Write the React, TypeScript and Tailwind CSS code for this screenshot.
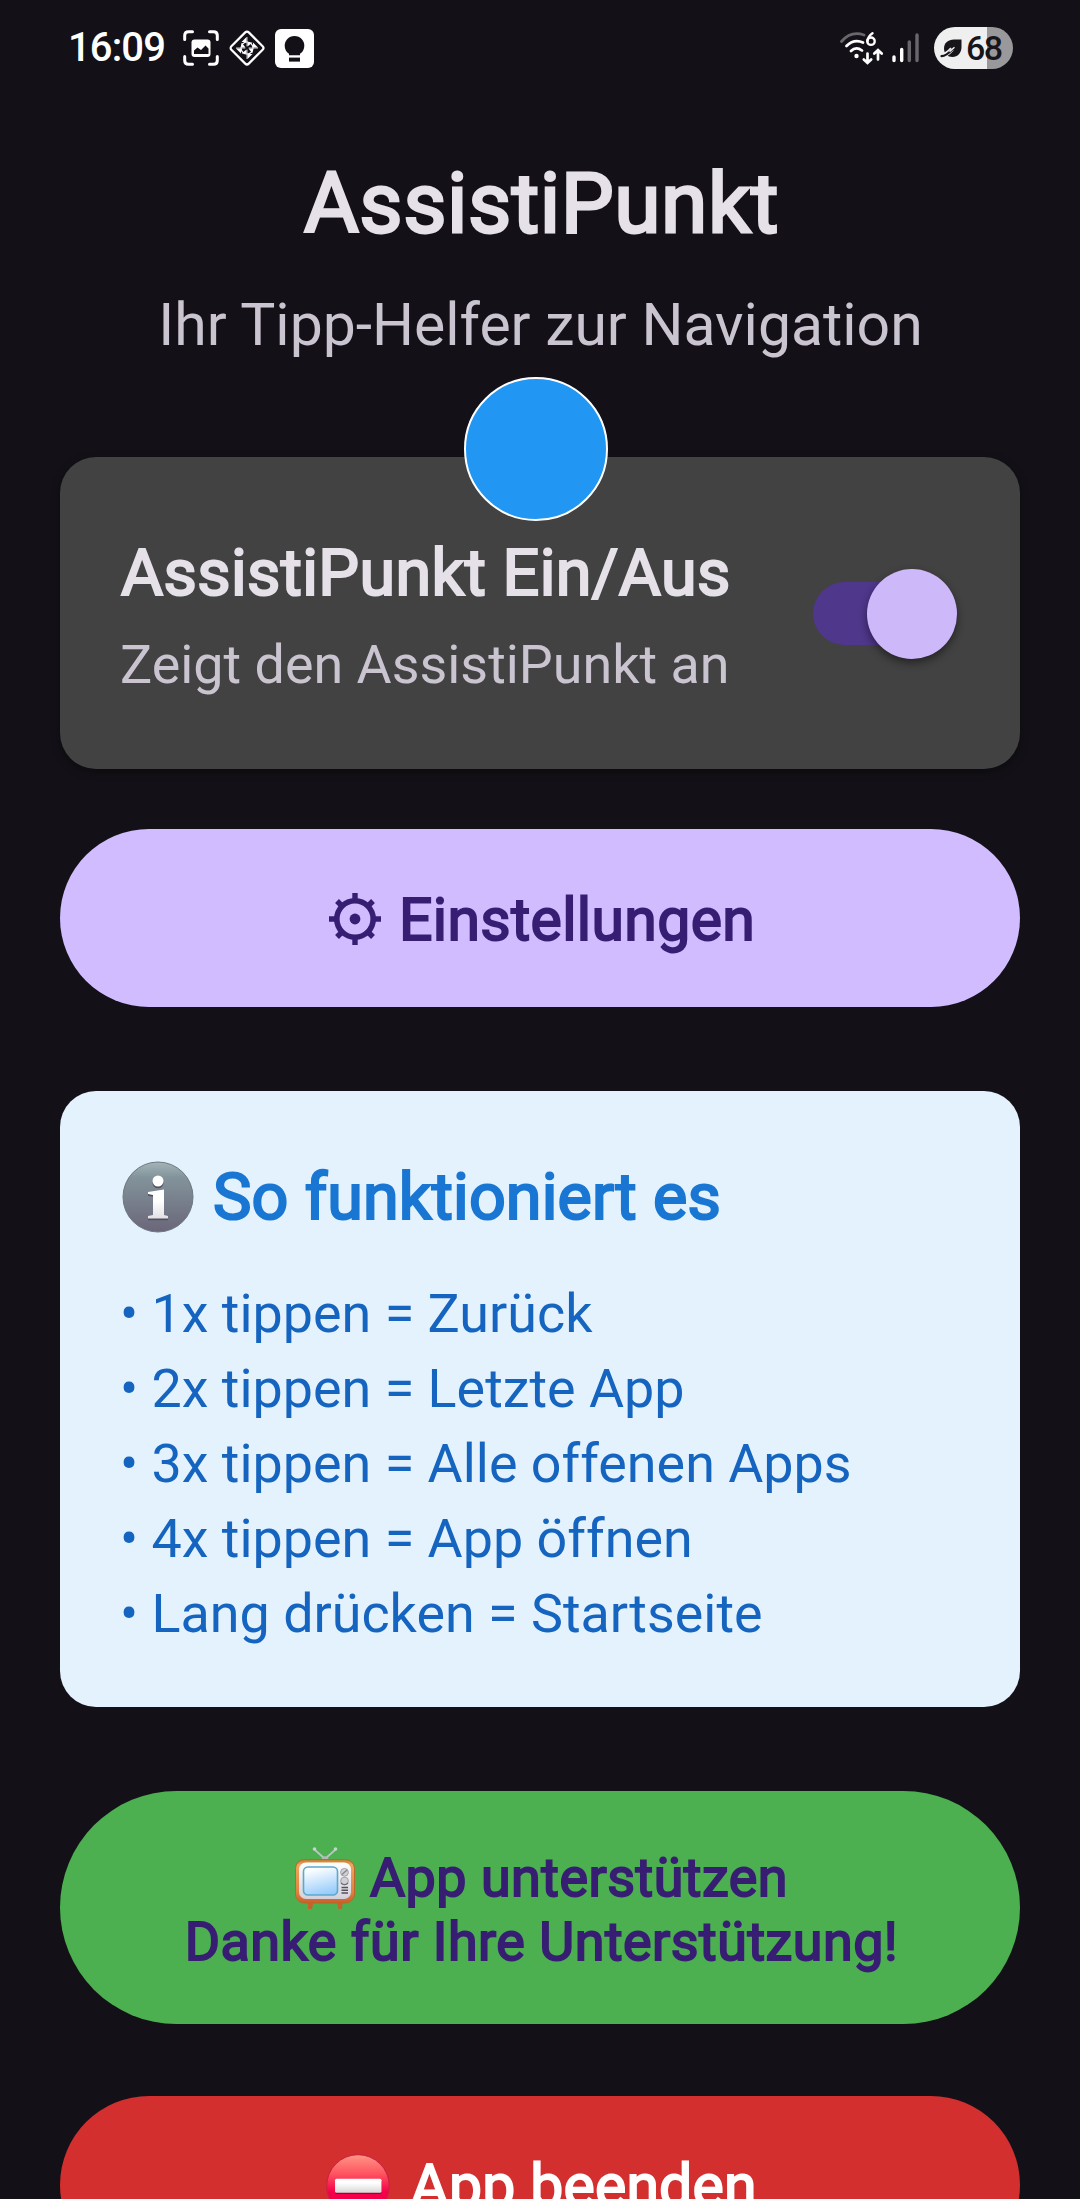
import type { ReactNode } from 'react';

function ScreenshotIcon() {
  return (
    <svg className="h-[36px] w-[36px]" viewBox="0 0 36 36" fill="none">
      <path d="M1.7 9.5V5.5Q1.7 1.7 5.5 1.7H9.5M26.5 1.7H30.5Q34.3 1.7 34.3 5.5V9.5M34.3 26.5V30.5Q34.3 34.3 30.5 34.3H26.5M9.5 34.3H5.5Q1.7 34.3 1.7 30.5V26.5" stroke="#fff" strokeWidth="3" strokeLinecap="round" />
      <rect x="8.5" y="9.5" width="19" height="17.5" rx="3" fill="#fff" />
      <path d="M11 24V20.5L14.5 17.5L18 20L22.5 15.5L25.5 18.5V24Z" fill="#131117" />
    </svg>
  );
}

function DiamondIcon() {
  return (
    <svg className="h-[38px] w-[38px]" viewBox="0 0 38 38" fill="none">
      <rect x="6.7" y="6.7" width="24.6" height="24.6" rx="2.5" transform="rotate(45 19 19)" stroke="#fff" strokeWidth="2.2" />
      <g fill="#fff">
        <path d="M18.5 8V13H13.5ZM19.5 13.5L24.5 13.5L19.5 17.5Z" />
        <path d="M30 18.5H25V13.5ZM24.5 19.5V24.5L20.5 19.5Z" />
        <path d="M19.5 30V25H24.5ZM18.5 24.5H13.5L18.5 20.5Z" />
        <path d="M8 19.5H13V24.5ZM13.5 18.5V13.5L17.5 18.5Z" />
      </g>
      <circle cx="19" cy="19" r="6" stroke="#fff" strokeWidth="1.2" />
      <path d="M8 19H30M19 8V30" stroke="#fff" strokeWidth="0.8" />
      <circle cx="19" cy="19" r="1.8" fill="#131117" />
    </svg>
  );
}

function BulbIcon() {
  return (
    <svg className="h-[39px] w-[39px]" viewBox="0 0 39 39">
      <rect width="39" height="39" rx="6" fill="#fff" />
      <path d="M14 26.3V24.8A9.8 9.8 0 1 1 25 24.8V26.3Z" fill="#131117" />
      <rect x="14" y="28.6" width="11" height="4" fill="#131117" />
    </svg>
  );
}

function WifiIcon() {
  return (
    <svg className="h-[36px] w-[46px]" viewBox="0 0 46 36" fill="none" strokeLinecap="round" strokeWidth="2.8">
      <path d="M2.5 11.5Q12 0.5 25 5" stroke="#69676c" />
      <path d="M7.5 16Q15 8.5 24 12.5M12 21Q17 16 23 20.5" stroke="#fff" />
      <circle cx="17.5" cy="26" r="2.2" fill="#fff" />
      <path d="M33.5 3.2C29.5 6 28.5 8.5 28.5 11.2" stroke="#fff" strokeWidth="2.4" />
      <circle cx="32" cy="11.2" r="3.7" stroke="#fff" strokeWidth="2.4" />
      <path d="M28.5 23.5V32.5M24.8 29.5L28.5 33L32.2 29.5M39 29.5V20.5M35.3 23.5L39 20L42.7 23.5" stroke="#fff" strokeWidth="2.7" />
    </svg>
  );
}

function SignalIcon() {
  return (
    <svg className="h-[30px] w-[28px]" viewBox="0 0 28 30" strokeWidth="3.4" strokeLinecap="round">
      <path d="M2 24V27.5M9.7 16.5V27.5" stroke="#fff" />
      <path d="M17.3 9V27.5M25 2V27.5" stroke="#69676c" />
    </svg>
  );
}

function LeafIcon() {
  return (
    <svg className="h-[21px] w-[23px]" viewBox="0 0 23 21">
      <path d="M21.5 1.5V9C21.5 15 17.5 19 12.5 19C7.5 19 4 15.5 4 10.5C4 5 8 1.5 14 1.5Z" fill="#17151a" />
      <path d="M0 17.5C5 18 9 14.5 12 11" fill="none" stroke="#efeff0" strokeWidth="4.4" />
      <path d="M1.5 18.2C5.5 18 9 15 12.5 11.5" fill="none" stroke="#17151a" strokeWidth="2.2" strokeLinecap="round" />
      <path d="M9.5 13.6L14.5 9.2" stroke="#efeff0" strokeWidth="1.4" />
    </svg>
  );
}

function GearIcon() {
  return (
    <svg className="h-[52px] w-[52px]" viewBox="-26 -26 52 52" fill="none" stroke="#371e73">
      <circle r="18.2" strokeWidth="5.6" />
      <circle r="5.4" fill="#371e73" stroke="none" />
      <path d="M0-20V-26M0 20V26M20 0H26M-20 0H-26M14-14L18-18M-14-14L-18-18M14 14L18 18M-14 14L-18 18" strokeWidth="5.4" />
    </svg>
  );
}

function InfoIcon() {
  return (
    <svg className="h-[72px] w-[72px] shrink-0" viewBox="0 0 72 72">
      <defs>
        <linearGradient id="infoDisc" x1="0" y1="0" x2="0" y2="1">
          <stop offset="0" stopColor="#a3b5b8" />
          <stop offset="0.22" stopColor="#82939b" />
          <stop offset="1" stopColor="#6a6679" />
        </linearGradient>
        <linearGradient id="infoMark" x1="0" y1="0" x2="0" y2="1">
          <stop offset="0.4" stopColor="#fff" />
          <stop offset="1" stopColor="#e2e0e3" />
        </linearGradient>
      </defs>
      <circle cx="36" cy="36" r="35" fill="url(#infoDisc)" stroke="#6d7881" strokeWidth="1" />
      <g transform="translate(0 1.8)" fill="#4f5060">
        <circle cx="36" cy="20" r="5.5" />
        <path d="M26 31L42 28.5V54L46 55V57.5H26V55L31 54V34L26 33Z" />
      </g>
      <circle cx="36" cy="20" r="5.5" fill="#fff" />
      <path d="M26 31L42 28.5V54L46 55V57.5H26V55L31 54V34L26 33Z" fill="url(#infoMark)" />
    </svg>
  );
}

function TvIcon() {
  return (
    <svg className="h-[64px] w-[60px] shrink-0" viewBox="0 0 60 64">
      <defs>
        <linearGradient id="tvWood" x1="0" y1="0" x2="0" y2="1">
          <stop offset="0" stopColor="#c07a2c" />
          <stop offset="0.12" stopColor="#eda75f" />
          <stop offset="0.75" stopColor="#e0823f" />
          <stop offset="1" stopColor="#c9602a" />
        </linearGradient>
        <linearGradient id="tvPanel" x1="0" y1="0" x2="0" y2="1">
          <stop offset="0" stopColor="#fff" />
          <stop offset="1" stopColor="#d3d0da" />
        </linearGradient>
        <linearGradient id="tvScreen" x1="0.3" y1="0" x2="0.6" y2="1">
          <stop offset="0.05" stopColor="#fff" />
          <stop offset="1" stopColor="#95cbfb" />
        </linearGradient>
      </defs>
      <path d="M19.5 2.5L30 12L40.5 2.5" fill="none" stroke="#b9c6c0" strokeWidth="1.8" />
      <circle cx="19.5" cy="2" r="1.8" fill="#c9d3ce" />
      <circle cx="40.5" cy="2" r="1.8" fill="#c9d3ce" />
      <path d="M26 12.5Q30 5.5 34 12.5Z" fill="#b2b9b7" />
      <path d="M13 55H18.5L17 62H13ZM42 55H47.5L47 62H43.5Z" fill="#c5632a" />
      <rect x="0.5" y="12.5" width="59" height="43.5" rx="9" fill="url(#tvWood)" stroke="#b8682b" />
      <rect x="4" y="15.5" width="52" height="36.5" rx="7" fill="url(#tvPanel)" />
      <rect x="8.5" y="20" width="34" height="28" rx="4.5" fill="url(#tvScreen)" stroke="#5ba9cb" strokeWidth="1.6" />
      <circle cx="49.5" cy="25.3" r="3.9" fill="#d0d0d5" stroke="#96959c" strokeWidth="0.8" />
      <path d="M47 27.5L52 23" stroke="#8a888f" strokeWidth="1.4" />
      <circle cx="49.5" cy="34" r="3.9" fill="#d0d0d5" stroke="#96959c" strokeWidth="0.8" />
      <path d="M46 36C48 38 51 38 53 36" fill="none" stroke="#716f76" strokeWidth="1.4" />
      <path d="M46.5 40.5H53M46.5 43.3H53M46.5 46.1H53" stroke="#55525c" strokeWidth="1.5" />
    </svg>
  );
}

function NoEntryIcon() {
  return (
    <svg className="h-[64px] w-[64px] shrink-0" viewBox="0 0 64 64">
      <defs>
        <linearGradient id="stopDisc" x1="0" y1="0" x2="0" y2="1">
          <stop offset="0" stopColor="#ff9787" />
          <stop offset="0.3" stopColor="#ff5561" />
          <stop offset="0.6" stopColor="#f40048" />
        </linearGradient>
        <linearGradient id="stopBar" x1="0" y1="0" x2="0" y2="1">
          <stop offset="0.3" stopColor="#fff" />
          <stop offset="1" stopColor="#d9d7d9" />
        </linearGradient>
      </defs>
      <circle cx="32" cy="32" r="31.3" fill="url(#stopDisc)" stroke="#c91f43" />
      <rect x="9" y="26.5" width="46.5" height="13.5" rx="1.5" fill="#a80036" />
      <rect x="9" y="24.7" width="46.5" height="14" rx="1.5" fill="url(#stopBar)" />
    </svg>
  );
}

function StatusBar() {
  return (
    <header className="flex h-[96px] items-center justify-between pr-[67px] pl-[68px] text-white">
      <div className="flex items-center">
        <span className="w-[115px] text-[40px] leading-[96px] font-medium tracking-[-0.9px]">16:09</span>
        <ScreenshotIcon />
        <span className="ml-[9px] flex"><DiamondIcon /></span>
        <span className="ml-[9px] flex"><BulbIcon /></span>
      </div>
      <div className="flex items-center">
        <WifiIcon />
        <span className="ml-[7px] flex"><SignalIcon /></span>
        <div className="ml-[14px] flex h-[42px] w-[79px] items-center rounded-full bg-[linear-gradient(to_right,#efeff0_53px,#99989a_53px)] pl-[6px] text-[#17151a]">
          <LeafIcon />
          <span className="ml-[3px] text-[34px] leading-[42px] font-medium tracking-[-1.6px]">68</span>
        </div>
      </div>
    </header>
  );
}

function ButtonLabel({ className, children }: { className: string; children: ReactNode }) {
  return <span className={`text-[58.9px] leading-[70px] whitespace-nowrap ${className}`}>{children}</span>;
}

const steps = [
  '1x tippen = Zurück',
  '2x tippen = Letzte App',
  '3x tippen = Alle offenen Apps',
  '4x tippen = App öffnen',
  'Lang drücken = Startseite',
];

export default function App() {
  return (
    <div className="h-[2199px] w-[1080px] overflow-hidden bg-[#131117] font-[Roboto,sans-serif]">
      <StatusBar />
      <main className="flex flex-col px-[60px] pt-[59px]">
        <h1 className="pl-[3px] text-center text-[84px] leading-[98px] tracking-[0.5px] text-[#e6e1e9] [-webkit-text-stroke:2.8px_#e6e1e9]">AssistiPunkt</h1>
        <p className="mt-[37px] pl-[1px] text-center text-[58.9px] leading-[70px] whitespace-nowrap text-[#cac4d0]">Ihr Tipp-Helfer zur Navigation</p>

        <section className="relative mt-[97px] flex h-[312px] items-start justify-between rounded-[36px] bg-[#424242] pr-[63px] pl-[60px] shadow-[0_3px_9px_rgba(0,0,0,0.4)]">
          <div className="flex flex-col pt-[77px]">
            <h2 className="pl-[1px] text-[64.6px] leading-[78px] tracking-[0.38px] whitespace-nowrap text-[#e6e1e9] [-webkit-text-stroke:2.2px_#e6e1e9]">AssistiPunkt Ein/Aus</h2>
            <p className="mt-[21px] text-[53.85px] leading-[64px] whitespace-nowrap text-[#cac4d0]">Zeigt den AssistiPunkt an</p>
          </div>
          <div className="mt-[125px] flex h-[63px] w-[144px] items-center justify-end rounded-full bg-[#4f378b]">
            <div className="h-[90px] w-[90px] shrink-0 rounded-full bg-[#cdb8fa] shadow-[0_4px_9px_rgba(0,0,0,0.45)]" />
          </div>
          <div className="absolute top-[-80px] left-[404px] h-[144px] w-[144px] rounded-full border-2 border-white bg-[#2196f3]" />
        </section>

        <button className="mt-[60px] flex h-[178px] items-center justify-center rounded-full bg-[#d0bcff] pt-[2px] pl-[4px]">
          <GearIcon />
          <ButtonLabel className="ml-[18px] pt-[1px] tracking-[0.35px] text-[#371e73] [-webkit-text-stroke:1.9px_#371e73]">Einstellungen</ButtonLabel>
        </button>

        <section className="mt-[84px] h-[616px] rounded-[36px] bg-[#e3f2fd] px-[60px] pt-[67px]">
          <div className="flex items-center pl-[2px]">
            <InfoIcon />
            <h2 className="ml-[19px] text-[64.6px] leading-[78px] tracking-[0.15px] whitespace-nowrap text-[#1976d2] [-webkit-text-stroke:2.2px_#1976d2]">So funktioniert es</h2>
          </div>
          <ul className="mt-[40px] text-[53.85px] leading-[75px] text-[#1565c0]">
            {steps.map((step) => (
              <li key={step} className="whitespace-nowrap">• {step}</li>
            ))}
          </ul>
        </section>

        <button className="mt-[84px] flex h-[233px] flex-col items-center justify-center rounded-full bg-[#4caf50] pt-[4px] pl-[3px] text-[53.85px] leading-[64px] tracking-[0.5px] text-[#371e73] [-webkit-text-stroke:1.9px_#371e73]">
          <span className="flex items-center whitespace-nowrap">
            <span className="mt-px -mb-px flex"><TvIcon /></span>
            <span className="ml-[15px]">App unterstützen</span>
          </span>
          <span className="whitespace-nowrap">Danke für Ihre Unterstützung!</span>
        </button>

        <button className="mt-[72px] flex h-[178px] items-center justify-center rounded-full bg-[#d32f2f] pt-[2px] pl-[3px]">
          <NoEntryIcon />
          <ButtonLabel className="ml-[20px] tracking-[0.2px] text-white [-webkit-text-stroke:1.9px_#fff]">App beenden</ButtonLabel>
        </button>
      </main>
    </div>
  );
}
